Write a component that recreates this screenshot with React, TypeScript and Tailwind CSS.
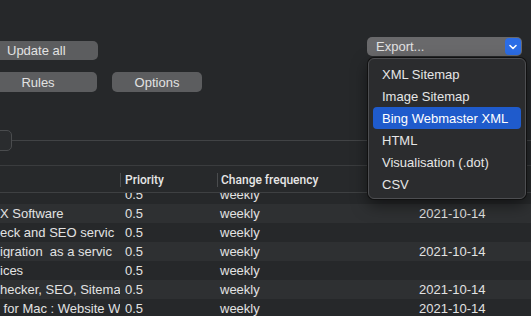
import React from "react";

const rows = [
  { name: "", pr: "0.5", freq: "weekly", date: "" },
  { name: "X Software", pr: "0.5", freq: "weekly", date: "2021-10-14" },
  { name: "eck and SEO servic", pr: "0.5", freq: "weekly", date: "" },
  { name: "igration  as a servic", pr: "0.5", freq: "weekly", date: "2021-10-14" },
  { name: "ices", pr: "0.5", freq: "weekly", date: "" },
  { name: "hecker, SEO, Sitema", pr: "0.5", freq: "weekly", date: "2021-10-14" },
  { name: " for Mac : Website W", pr: "0.5", freq: "weekly", date: "2021-10-14" },
  { name: "", pr: "0.5", freq: "weekly", date: "" },
];

const menu = ["XML Sitemap", "Image Sitemap", "Bing Webmaster XML", "HTML", "Visualisation (.dot)", "CSV"];

export default function App() {
  return (
    <div
      className="relative w-[531px] h-[316px] overflow-hidden bg-[#26282a] text-[13px] text-[#e2e2e2]"
      style={{ fontFamily: '"Liberation Sans", Arial, sans-serif' }}
    >
      {/* toolbar */}
      <div className="h-[165px] flex flex-col">
        <div className="flex justify-between pt-[37px]">
          <div className="mt-[4px] ml-[-20px] w-[118px] h-[19px] rounded-[5px] bg-[#5c5d5f] flex items-center pl-[27px] leading-none">
            Update all
          </div>
          <div className="mr-[9px] w-[155px] h-[19px] rounded-[5px] bg-[#69696b] flex items-center justify-between pl-[9px] pr-[1px] leading-none">
            <span>Export...</span>
            <div className="w-[16px] h-[17px] rounded-[4px] bg-[#2c6de6] flex items-center justify-center">
              <svg width="8" height="6" viewBox="0 0 8 6">
                <path d="M1 1.5 L4 4.5 L7 1.5" fill="none" stroke="white" strokeWidth="1.6" strokeLinecap="round" strokeLinejoin="round" />
              </svg>
            </div>
          </div>
        </div>
        <div className="flex gap-[15px] mt-[12px]">
          <div className="ml-[-21px] w-[118px] h-[20px] rounded-[5px] bg-[#5c5d5f] flex items-center justify-center leading-none">
            Rules
          </div>
          <div className="w-[90px] h-[20px] rounded-[5px] bg-[#5c5d5f] flex items-center justify-center leading-none">
            Options
          </div>
        </div>
        <div className="flex items-center mt-[38px]">
          <div className="ml-[-20px] w-[32px] h-[21px] rounded-[5px] border border-[#4a4c4e] bg-[#2a2c2e]" />
          <div className="flex-1 h-px bg-[#414345]" />
        </div>
      </div>

      {/* table */}
      <div className="border-t border-[#3a3c3e]">
        <div
          className="h-[27px] flex items-center pt-[2px] border-b border-[#3e4042] bg-[#27292b] text-[12px] font-medium text-[#e6e6e6]"
          style={{ fontFamily: 'Roboto, "Liberation Sans", sans-serif' }}
        >
          <div className="w-[120px]" />
          <div className="w-[97px] flex items-center">
            <div className="w-px h-[14px] bg-[#4a4c4e]" />
            <span className="pl-[4px]">Priority</span>
          </div>
          <div className="flex items-center">
            <div className="w-px h-[14px] bg-[#4a4c4e]" />
            <span className="pl-[3px]">Change frequency</span>
          </div>
        </div>
        <div className="h-[140px] overflow-hidden">
          <div className="mt-[-8px]">
            {rows.map((r, i) => (
              <div
                key={i}
                className={`h-[19px] flex items-center leading-none whitespace-pre ${i % 2 === 1 ? "bg-[#2e3032]" : "bg-[#26282a]"}`}
              >
                <div className="w-[120px] overflow-hidden">{r.name}</div>
                <div className="w-[97px] pl-[5px]">{r.pr}</div>
                <div className="w-[202px] pl-[3px]">{r.freq}</div>
                <div>{r.date}</div>
              </div>
            ))}
          </div>
        </div>
      </div>

      {/* dropdown menu */}
      <div className="absolute left-[368px] top-[58px] w-[158px] h-[141px] rounded-[6px] border border-[#4d4e51] bg-[#2b2c2e] shadow-[0_0_0_1px_#111,0_6px_16px_rgba(0,0,0,0.5)] pt-[4px] px-[4px]">
        {menu.map((m) => (
          <div
            key={m}
            className={`h-[22px] flex items-center pl-[9px] rounded-[4px] leading-none ${m === "Bing Webmaster XML" ? "bg-[#1f5bcc] text-white" : "text-[#e6e6e6]"}`}
          >
            {m}
          </div>
        ))}
      </div>
    </div>
  );
}
